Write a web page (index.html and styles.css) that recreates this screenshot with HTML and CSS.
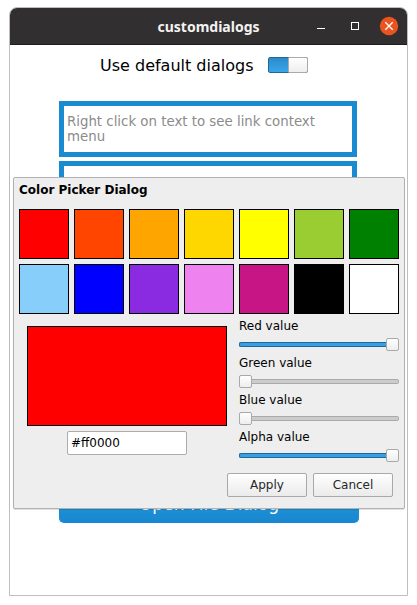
FILE: index.html
```html
<!DOCTYPE html>
<html lang="en">
<head>
<meta charset="utf-8">
<title>customdialogs</title>
<link rel="stylesheet" href="styles.css">
</head>
<body>
<div class="window">
  <header class="titlebar">
    <h1 class="title">customdialogs</h1>
    <div class="controls">
      <svg width="90" height="20" viewBox="0 0 90 20" fill="none">
        <path d="M7 10.500h8" stroke="#fff"/>
        <rect x="41.500" y="4.500" width="7" height="7" stroke="#fff"/>
        <circle cx="79" cy="8" r="9.200" fill="#e95420"/>
        <path d="M75.300 4.300l7.400 7.400M82.700 4.300l-7.400 7.400" stroke="#fff" stroke-width="1.300"/>
      </svg>
    </div>
  </header>
  <main class="content">
    <div class="default-row">
      <span class="default-label">Use default dialogs</span>
      <span class="switch"><span class="switch-knob"></span></span>
    </div>
    <div class="link-box">Right click on text to see link context menu</div>
    <div class="link-box"></div>
    <button class="open-button">Open File Dialog</button>
  </main>
  <section class="dialog">
    <h2 class="dialog-title">Color Picker Dialog</h2>
    <div class="swatches">
      <span class="swatch red"></span>
      <span class="swatch orangered"></span>
      <span class="swatch orange"></span>
      <span class="swatch gold"></span>
      <span class="swatch yellow"></span>
      <span class="swatch yellowgreen"></span>
      <span class="swatch green"></span>
      <span class="swatch skyblue"></span>
      <span class="swatch blue"></span>
      <span class="swatch violet"></span>
      <span class="swatch pink"></span>
      <span class="swatch magenta"></span>
      <span class="swatch black"></span>
      <span class="swatch white"></span>
    </div>
    <div class="editor">
      <div class="preview-column">
        <div class="preview red"></div>
        <div class="hex-field">#ff0000</div>
      </div>
      <div class="sliders">
        <div class="slider-label">Red value</div>
        <div class="slider full"><span class="track"></span><span class="handle"></span></div>
        <div class="slider-label">Green value</div>
        <div class="slider"><span class="handle"></span><span class="track"></span></div>
        <div class="slider-label">Blue value</div>
        <div class="slider"><span class="handle"></span><span class="track"></span></div>
        <div class="slider-label">Alpha value</div>
        <div class="slider full"><span class="track"></span><span class="handle"></span></div>
      </div>
    </div>
    <div class="actions">
      <button class="action">Apply</button>
      <button class="action">Cancel</button>
    </div>
  </section>
</div>
</body>
</html>
```
FILE: styles.css
```css
* { box-sizing: border-box; }

body {
  margin: 0;
  padding: 7px 9px 9px;
  background: #fff;
  color: #000;
  font: 12px/14px "DejaVu Sans", sans-serif;
}

.window {
  position: relative;
  width: 399px;
  height: 589px;
  border: 1px solid #bebebe;
  border-radius: 8px 8px 0 0;
}

.titlebar {
  display: grid;
  grid-template-columns: 90px 1fr 90px;
  height: 37px;
  background: #322f30;
  border-bottom: 1px solid #1f1d1e;
  border-radius: 7px 7px 0 0;
}

.title {
  grid-column: 2;
  margin: 0;
  color: #f4f2f1;
  font: bold 14px/38px "Noto Sans", sans-serif;
  text-align: center;
  white-space: nowrap;
}

.controls {
  margin: 10px 0 0 -7px;
}

.controls svg {
  display: block;
  overflow: visible;
}

.content {
  display: flex;
  flex-direction: column;
  align-items: flex-start;
  height: 550px;
  padding-left: 49px;
}

.default-row {
  display: flex;
  align-items: center;
  gap: 14px;
  height: 20px;
  margin: 10px 0 26px 41px;
  font-size: 16px;
  line-height: 20px;
  white-space: nowrap;
}

.default-label { padding-top: 2px; }

.switch {
  display: flex;
  justify-content: flex-end;
  width: 40px;
  height: 16px;
  border: 1px solid #206895;
  border-radius: 2px;
  background: linear-gradient(#2c8bca, #3aa5eb);
}

.switch-knob {
  width: 20px;
  height: 16px;
  margin: -1px;
  border: 1px solid #aaa;
  border-radius: 1px 2px 2px 1px;
  background: linear-gradient(#fefefe, #eee);
}

.link-box {
  width: 298px;
  height: 56px;
  margin-bottom: 4px;
  padding: 8px 3px;
  border: 5px solid #198bd0;
  color: #8b8b8b;
  font-size: 13.33px;
  line-height: 15px;
}

.open-button {
  width: 300px;
  height: 40px;
  margin-top: auto;
  margin-bottom: 72px;
  padding: 3px 0 0;
  border: 0;
  border-bottom: 1px solid #1687ea;
  border-radius: 5px;
  background: linear-gradient(#21a0e2, #1987cf);
  color: #fff;
  flex: none;
  font: 17.2px/36px "DejaVu Sans", sans-serif;
}

.dialog {
  position: absolute;
  left: 3px;
  top: 169px;
  width: 392px;
  height: 332px;
  padding: 5px;
  border: 1px solid #b1b1b1;
  border-radius: 2px;
  background: #eee;
  box-shadow: 0 1px 1px #0002;
}

.dialog-title {
  height: 26px;
  margin: 0;
  font: bold 12px/14px "DejaVu Sans", sans-serif;
}

.swatches {
  display: grid;
  grid-template-columns: repeat(7, 50px);
  gap: 5px;
}

.swatch {
  height: 50px;
  border: 1px solid #000;
}

.red { background: #f00; }
.orangered { background: #ff4500; }
.orange { background: #ffa500; }
.gold { background: #ffd700; }
.yellow { background: #ff0; }
.yellowgreen { background: #9acd32; }
.green { background: #008000; }
.skyblue { background: #87cefa; }
.blue { background: #00f; }
.violet { background: #8a2be2; }
.pink { background: #ee82ee; }
.magenta { background: #c71585; }
.black { background: #000; }
.white { background: #fff; }

.editor {
  display: flex;
  gap: 12px;
  margin-top: 5px;
  padding-left: 8px;
}

.preview-column {
  display: flex;
  flex-direction: column;
  align-items: center;
  gap: 5px;
  width: 200px;
  padding-top: 7px;
}

.preview {
  width: 200px;
  height: 100px;
  border: 1px solid #000;
}

.hex-field {
  width: 120px;
  height: 24px;
  padding-left: 3px;
  border: 1px solid #acacac;
  border-radius: 2px;
  background: #fff;
  line-height: 23px;
}

.sliders { width: 160px; }

.slider-label {
  height: 14px;
  white-space: nowrap;
}

.slider {
  display: flex;
  align-items: center;
  height: 13px;
  margin: 5px 0;
}

.track {
  flex: 1;
  height: 5px;
  border: 1px solid #aaa;
  border-left: 0;
  border-radius: 0 2px 2px 0;
  background: #ccc;
}

.full .track {
  border: 1px solid #206895;
  border-right: 0;
  border-radius: 2px 0 0 2px;
  background: #389fe3;
}

.handle {
  width: 13px;
  height: 13px;
  border: 1px solid #a9a9a9;
  border-radius: 2px;
  background: linear-gradient(#fefefe, #eee);
}

.actions {
  display: flex;
  justify-content: flex-end;
  gap: 6px;
  margin-top: 6px;
  padding-right: 6px;
}

.action {
  width: 80px;
  height: 24px;
  padding: 0;
  border: 1px solid #a9a9a9;
  border-radius: 2px;
  background: linear-gradient(#fefefe, #ebebeb);
  color: #26282a;
  font: 12px/22px "DejaVu Sans", sans-serif;
}
```
